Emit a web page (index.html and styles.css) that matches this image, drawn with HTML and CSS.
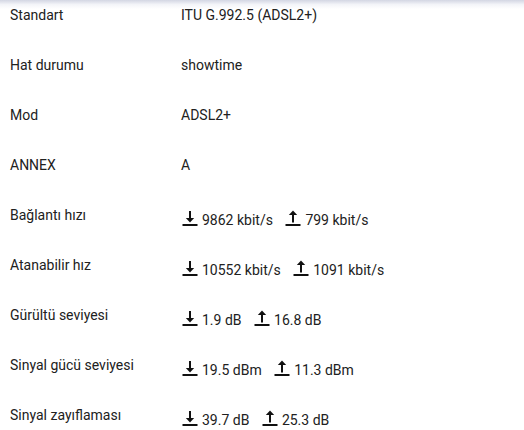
FILE: index.html
```html
<!DOCTYPE html>
<html lang="tr">
<head>
<meta charset="utf-8">
<link rel="stylesheet" href="styles.css">
</head>
<body>
<div class="shade"></div>
<div class="list">
  <div class="row"><div class="label">Standart</div><div class="value">ITU G.992.5 (ADSL2+)</div></div>
  <div class="row"><div class="label">Hat durumu</div><div class="value">showtime</div></div>
  <div class="row"><div class="label">Mod</div><div class="value">ADSL2+</div></div>
  <div class="row"><div class="label">ANNEX</div><div class="value">A</div></div>
  <div class="row"><div class="label">Bağlantı hızı</div><div class="value rates">
    <span class="pair"><svg class="ico" viewBox="0 0 16 16"><rect x="7" y="1" width="2" height="8.5"/><path d="M3.8 8h8.4L8 12.6z"/><rect x="0.5" y="14" width="15" height="2"/></svg>9862 kbit/s</span>
    <span class="pair"><svg class="ico" viewBox="0 0 16 16"><rect x="7" y="4.5" width="2" height="8"/><path d="M3.8 5h8.4L8 0.4z"/><rect x="0.5" y="14" width="15" height="2"/></svg>799 kbit/s</span>
  </div></div>
  <div class="row"><div class="label">Atanabilir hız</div><div class="value rates">
    <span class="pair"><svg class="ico" viewBox="0 0 16 16"><rect x="7" y="1" width="2" height="8.5"/><path d="M3.8 8h8.4L8 12.6z"/><rect x="0.5" y="14" width="15" height="2"/></svg>10552 kbit/s</span>
    <span class="pair"><svg class="ico" viewBox="0 0 16 16"><rect x="7" y="4.5" width="2" height="8"/><path d="M3.8 5h8.4L8 0.4z"/><rect x="0.5" y="14" width="15" height="2"/></svg>1091 kbit/s</span>
  </div></div>
  <div class="row"><div class="label">Gürültü seviyesi</div><div class="value rates">
    <span class="pair"><svg class="ico" viewBox="0 0 16 16"><rect x="7" y="1" width="2" height="8.5"/><path d="M3.8 8h8.4L8 12.6z"/><rect x="0.5" y="14" width="15" height="2"/></svg>1.9 dB</span>
    <span class="pair"><svg class="ico" viewBox="0 0 16 16"><rect x="7" y="4.5" width="2" height="8"/><path d="M3.8 5h8.4L8 0.4z"/><rect x="0.5" y="14" width="15" height="2"/></svg>16.8 dB</span>
  </div></div>
  <div class="row"><div class="label">Sinyal gücü seviyesi</div><div class="value rates">
    <span class="pair"><svg class="ico" viewBox="0 0 16 16"><rect x="7" y="1" width="2" height="8.5"/><path d="M3.8 8h8.4L8 12.6z"/><rect x="0.5" y="14" width="15" height="2"/></svg>19.5 dBm</span>
    <span class="pair"><svg class="ico" viewBox="0 0 16 16"><rect x="7" y="4.5" width="2" height="8"/><path d="M3.8 5h8.4L8 0.4z"/><rect x="0.5" y="14" width="15" height="2"/></svg>11.3 dBm</span>
  </div></div>
  <div class="row"><div class="label">Sinyal zayıflaması</div><div class="value rates">
    <span class="pair"><svg class="ico" viewBox="0 0 16 16"><rect x="7" y="1" width="2" height="8.5"/><path d="M3.8 8h8.4L8 12.6z"/><rect x="0.5" y="14" width="15" height="2"/></svg>39.7 dB</span>
    <span class="pair"><svg class="ico" viewBox="0 0 16 16"><rect x="7" y="4.5" width="2" height="8"/><path d="M3.8 5h8.4L8 0.4z"/><rect x="0.5" y="14" width="15" height="2"/></svg>25.3 dB</span>
  </div></div>
</div>
</body>
</html>
```
FILE: styles.css
```css
html, body {
  margin: 0;
  padding: 0;
  background: #fff;
}
body {
  font-family: Roboto, "Liberation Sans", sans-serif;
  font-size: 14px;
  color: #212121;
  position: relative;
  width: 524px;
  height: 430px;
  overflow: hidden;
}
.shade {
  position: absolute;
  left: 0;
  top: 0;
  width: 100%;
  height: 9px;
  background: linear-gradient(to bottom, #d3d6e3 0%, rgba(235,237,244,0.6) 50%, rgba(255,255,255,0) 100%);
}
.list {
  padding-left: 10px;
}
.row {
  display: grid;
  grid-template-columns: 171px 1fr;
  align-items: start;
  height: 50px;
  padding-top: 7px;
  box-sizing: border-box;
  line-height: 16px;
}
.value.rates {
  padding-top: 3px;
  padding-left: 1px;
  white-space: nowrap;
}
.pair {
  margin-right: 9px;
}
.ico {
  width: 16px;
  height: 16px;
  fill: #111;
  vertical-align: -1px;
  margin-right: 4px;
}
```
